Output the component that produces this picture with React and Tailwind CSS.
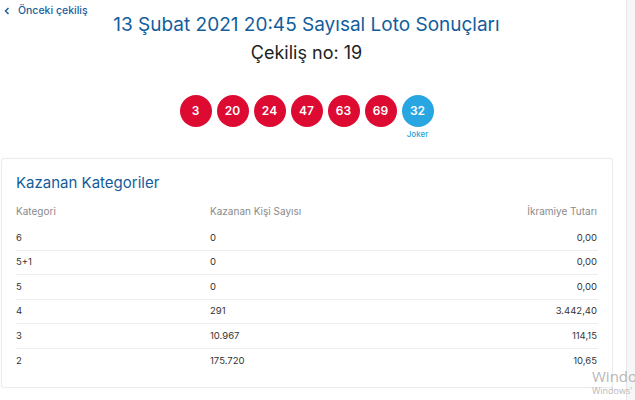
import React from "react";

const balls = ["3", "20", "24", "47", "63", "69"];
const rows = [
  ["6", "0", "0,00"],
  ["5+1", "0", "0,00"],
  ["5", "0", "0,00"],
  ["4", "291", "3.442,40"],
  ["3", "10.967", "114,15"],
  ["2", "175.720", "10,65"],
];

export default function App() {
  return (
    <div className="relative flex h-[400px] w-[635px] overflow-hidden bg-white font-['Inter',sans-serif]">
      <div className="w-[613px] shrink-0">
        <div className="flex h-[20px] items-center pl-[3px] pt-[1px] text-[10.5px] font-medium text-[#1a5f9e]">
          <svg width="8" height="8" viewBox="0 0 8 8" className="mr-[7px]">
            <path d="M5.5 1 L2.5 4 L5.5 7" fill="none" stroke="#1a5f9e" strokeWidth="1.5" />
          </svg>
          <span>Önceki çekiliş</span>
        </div>
        <div className="mt-[-8px] text-center text-[19px] leading-[26px] text-[#135d9c]">
          13 Şubat 2021 20:45 Sayısal Loto Sonuçları
        </div>
        <div className="mt-[3px] text-center text-[18px] leading-[24px] text-[#222]">
          Çekiliş no: 19
        </div>
        <div className="mt-[30px] flex justify-center gap-[5px]">
          {balls.map((b) => (
            <div key={b} className="flex h-[32px] w-[32px] items-center justify-center rounded-full bg-[#dd0a32] text-[12px] font-semibold text-white">
              {b}
            </div>
          ))}
          <div className="flex flex-col items-center">
            <div className="flex h-[32px] w-[32px] items-center justify-center rounded-full bg-[#27a6e1] text-[12px] font-semibold text-white">
              32
            </div>
            <div className="mt-[1px] text-[8px] leading-[12px] font-medium text-[#2a9fd8]">Joker</div>
          </div>
        </div>
        <div className="ml-[1px] mt-[18px] rounded-[3px] border border-[#ececec] bg-white px-[14px] pb-[13px] pt-[14px] shadow-[0_0_2px_rgba(0,0,0,0.04)]">
          <div className="text-[15px] leading-[20px] text-[#135d9c]">Kazanan Kategoriler</div>
          <div className="mt-[6px] grid h-[24px] grid-cols-[194px_1fr_auto] items-center text-[10px] text-[#8a8a8a]">
            <span>Kategori</span>
            <span>Kazanan Kişi Sayısı</span>
            <span className="pr-[1px]">İkramiye Tutarı</span>
          </div>
          <div className="h-[3px]" />
          {rows.map((r, i) => (
            <div
              key={r[0]}
              className={`grid h-[24.6px] grid-cols-[194px_1fr_auto] items-center text-[9.5px] text-[#333] ${i < rows.length - 1 ? "border-b border-[#eeeeee]" : ""}`}
            >
              <span>{r[0]}</span>
              <span>{r[1]}</span>
              <span className="pr-[1px]">{r[2]}</span>
            </div>
          ))}
        </div>
      </div>
      <div className="flex-1" />
      <div className="h-full w-[9px] border-l border-[#e6e6e6] bg-[#f6f6f6]" />
      <div className="pointer-events-none absolute left-[592px] top-[366px] whitespace-nowrap font-['Open_Sans',sans-serif] text-[15px] leading-[20px] text-[#b8b8b8]">
        Windows
      </div>
      <div className="pointer-events-none absolute left-[592px] top-[385px] whitespace-nowrap font-['Open_Sans',sans-serif] text-[9px] leading-[12px] text-[#b8b8b8]">
        Windows'
      </div>
    </div>
  );
}
